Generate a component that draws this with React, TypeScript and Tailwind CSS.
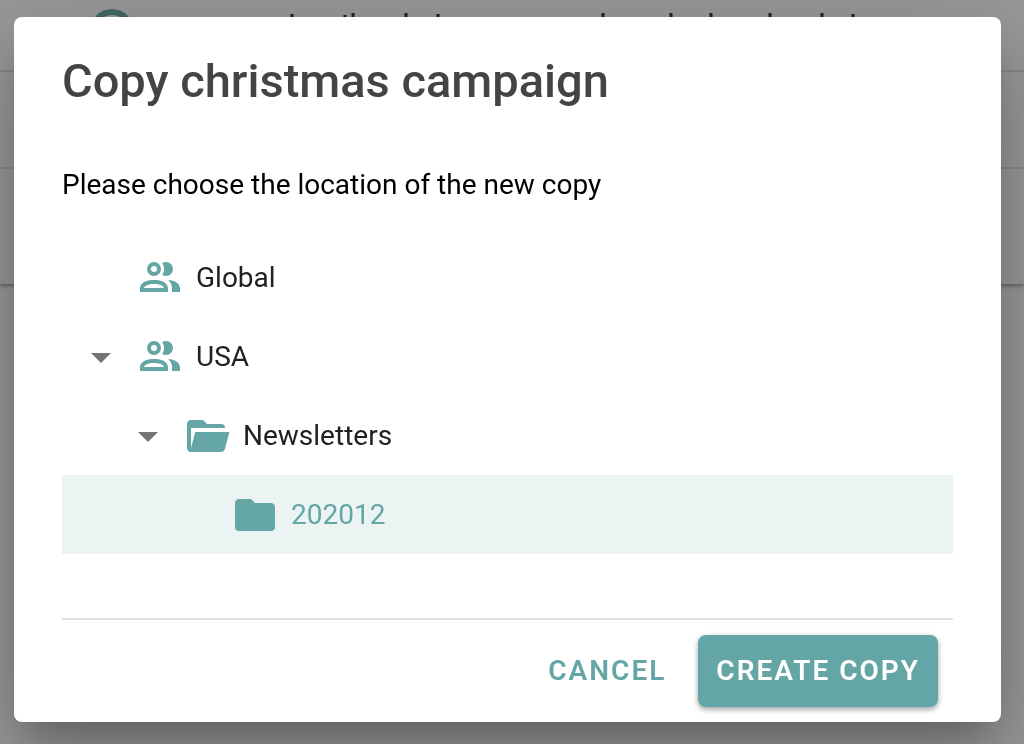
import React, { useState } from "react";

const icons = {
  group:
    "M13.07 10.41A5 5 0 0 0 13.07 4.59A3.39 3.39 0 0 1 15 4A3.5 3.5 0 0 1 15 11A3.39 3.39 0 0 1 13.07 10.41M5.5 7.5A3.5 3.5 0 1 1 9 11A3.5 3.5 0 0 1 5.5 7.5M7.5 7.5A1.5 1.5 0 1 0 9 6A1.5 1.5 0 0 0 7.5 7.5M16 17V19H2V17S2 13 9 13 16 17 16 17M14 17C13.86 16.22 12.67 15 9 15S4.07 16.31 4 17M15.95 13A5.32 5.32 0 0 1 18 17V19H22V17S22 13.37 15.94 13Z",
  folderOpen:
    "M19,20H4C2.89,20 2,19.1 2,18V6C2,4.89 2.89,4 4,4H10L12,6H19A2,2 0 0,1 21,8H21L4,8V18L6.14,10H23.21L20.93,18.5C20.7,19.37 19.92,20 19,20Z",
  folder:
    "M10,4H4C2.89,4 2,4.89 2,6V18A2,2 0 0,0 4,20H20A2,2 0 0,0 22,18V8C22,6.89 21.1,6 20,6H12L10,4Z",
  menuDown: "M7,10L12,15L17,10H7Z",
};

const Icon = ({ name }: { name: keyof typeof icons }) => (
  <svg viewBox="0 0 24 24" className="size-12 shrink-0" fill="currentColor" aria-hidden="true">
    <path d={icons[name]} />
  </svg>
);

type Row = {
  label: string;
  icon: keyof typeof icons;
  indent: string;
  open?: boolean;
};

const rows: Row[] = [
  { label: "Global", icon: "group", indent: "pl-[15px]" },
  { label: "USA", icon: "group", indent: "pl-[15px]", open: true },
  { label: "Newsletters", icon: "folderOpen", indent: "pl-[62px]", open: true },
  { label: "202012", icon: "folder", indent: "pl-[110px]" },
];

// The list behind the dialog, dimmed by the overlay
const Backdrop = () => (
  <div className="fixed inset-0 bg-white" aria-hidden="true">
    <div className="bg-white shadow-[0_2px_4px_rgba(0,0,0,0.4)]">
      <div className="h-[72px] border-b-2 border-black/12">
        <svg width="900" height="40">
          <circle cx="112" cy="31" r="19" fill="none" stroke="#63a6a5" strokeWidth="6" />
          <path
            d="M292 14v4M345 15v3M353 13v5M406 13v5M438 14v4M603 13v5M671 13v5M711 13v5M770 13v5M822 13v5M853 14v4"
            stroke="#212121"
            strokeWidth="3"
          />
        </svg>
      </div>
      <div className="h-[97px] border-b-2 border-black/12" />
      <div className="h-[115px]" />
    </div>
    <div className="absolute inset-0 bg-[#212121]/46" />
  </div>
);

const App = () => {
  const [selected, setSelected] = useState("202012");

  return (
    <main className="font-[Roboto,sans-serif] text-[28px] leading-10 pt-[17px] pb-[22px] pl-[14px] pr-[23px]">
      <Backdrop />
      <section
        role="dialog"
        aria-labelledby="dialog-title"
        className="relative rounded-lg bg-white px-12 shadow-[0_22px_30px_-14px_rgba(0,0,0,0.2),0_48px_76px_6px_rgba(0,0,0,0.14),0_18px_92px_16px_rgba(0,0,0,0.12)]"
      >
        <h1 id="dialog-title" className="pt-8 text-[47px] leading-16 font-medium text-[#444]">
          Copy christmas campaign
        </h1>
        <p className="pt-[52px] pb-[33px] text-black">Please choose the location of the new copy</p>

        <ul role="tree" aria-label="Location">
          {rows.map((row) => {
            const active = row.label === selected;
            return (
              <li
                key={row.label}
                role="treeitem"
                aria-selected={active}
                className={`flex h-[79px] items-center gap-[11px] ${row.indent} ${
                  active ? "bg-[#ebf4f3] text-[#63a6a5]" : "text-[#212121]"
                }`}
              >
                {row.open ? (
                  <button type="button" aria-label={`Collapse ${row.label}`} className="text-[#757575]">
                    <Icon name="menuDown" />
                  </button>
                ) : (
                  <span className="w-12" />
                )}
                <button
                  type="button"
                  onClick={() => setSelected(row.label)}
                  className="flex flex-1 items-center gap-3 text-left"
                >
                  <span className="text-[#63a6a5]">
                    <Icon name={row.icon} />
                  </span>
                  {row.label}
                </button>
              </li>
            );
          })}
        </ul>

        <div className="mt-16 flex items-center justify-end gap-3.5 border-t-2 border-[#e0e0e0] pt-[15px] pr-[15px] pb-[15px] font-semibold">
          <button type="button" className="h-[72px] px-[18px] tracking-[2px] text-[#63a6a5]">
            CANCEL
          </button>
          <button
            type="button"
            className="h-[72px] rounded-lg bg-[#63a6a5] px-[18px] tracking-[2px] text-white shadow-[0_2px_6px_rgba(0,0,0,0.25),0_3px_4px_rgba(0,0,0,0.14)]"
          >
            CREATE COPY
          </button>
        </div>
      </section>
    </main>
  );
};

export default App;
